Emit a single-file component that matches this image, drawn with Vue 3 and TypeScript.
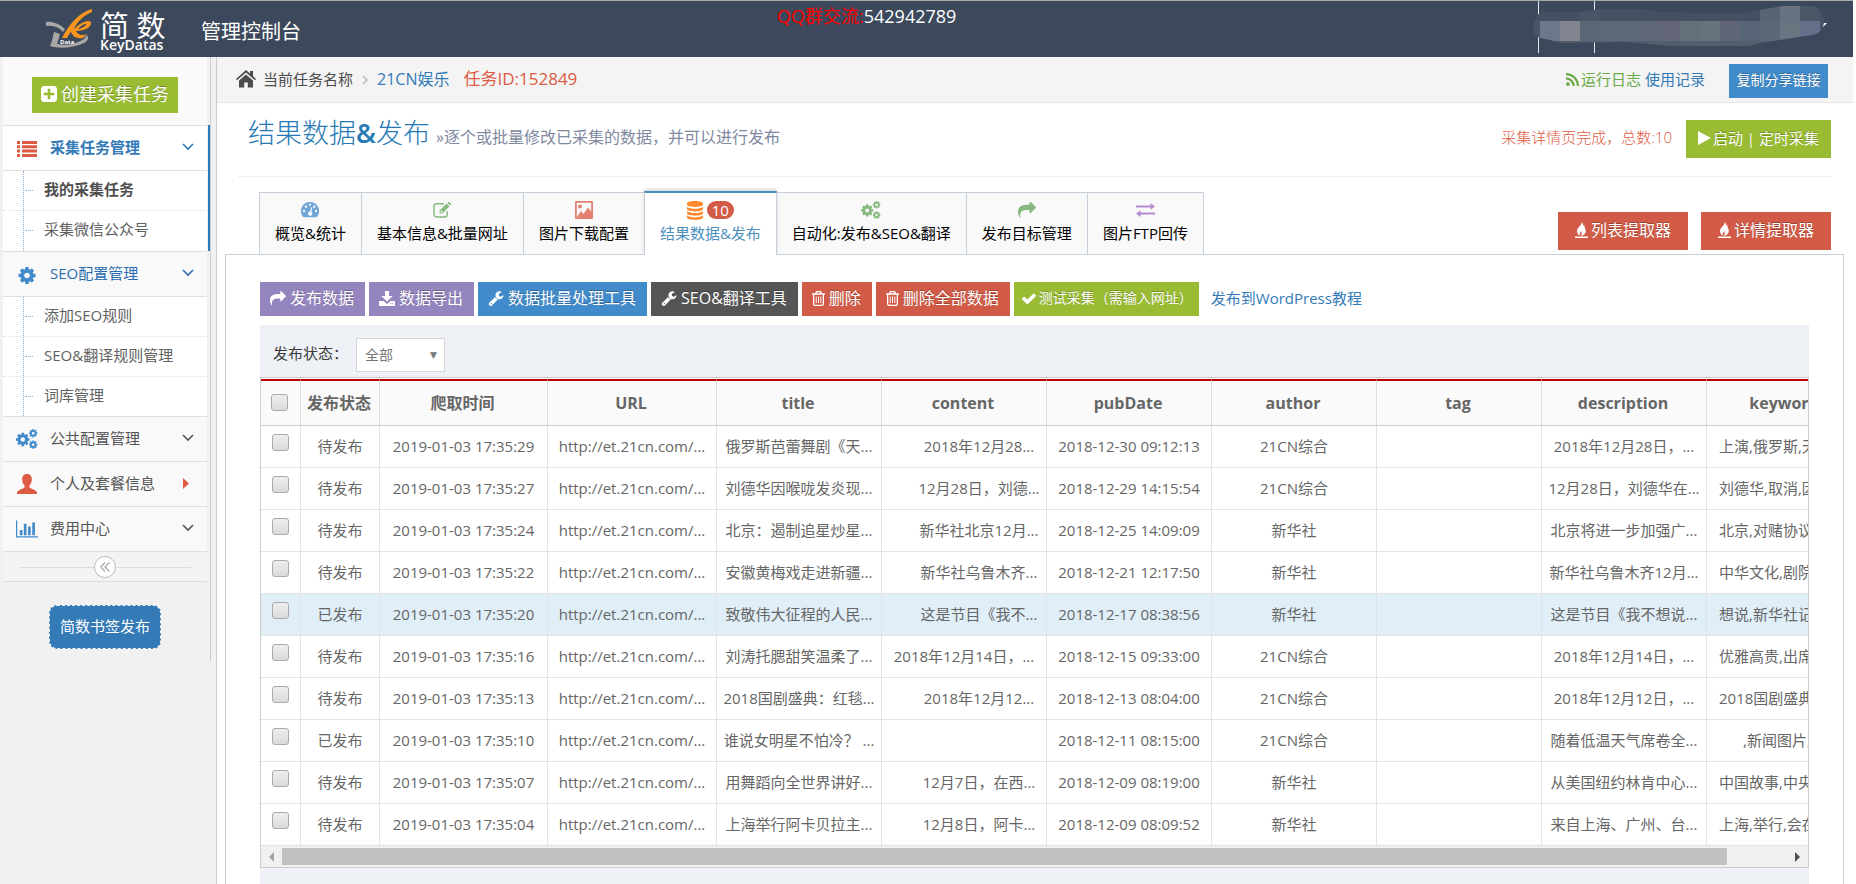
<script setup lang="ts">
import { h, ref } from 'vue'

const cog =
  'M1152 896q0-106-75-181t-181-75-181 75-75 181 75 181 181 75 181-75 75-181zm512-109v222q0 12-8 23t-20 13l-185 28q-19 54-39 91 35 50 107 138 10 12 10 25t-9 23q-27 37-99 108t-94 71q-12 0-26-9l-138-108q-44 23-91 38-16 136-29 186-7 28-36 28h-222q-14 0-24.5-8.5t-11.5-21.5l-28-184q-49-16-90-37l-141 107q-10 9-25 9-14 0-25-11-126-114-165-168-7-10-7-23 0-12 8-23 15-21 51-66.5t54-70.5q-27-50-41-99l-183-27q-13-2-21-12.5t-8-23.5v-222q0-12 8-23t19-13l186-28q14-46 39-92-40-57-107-138-10-12-10-24 0-10 9-23 26-36 98.5-107.5t94.5-71.5q13 0 26 10l138 107q44-23 91-38 16-136 29-186 7-28 36-28h222q14 0 24.5 8.5t11.5 21.5l28 184q49 16 90 37l142-107q9-9 24-9 13 0 25 10 129 119 165 170 7 8 7 22 0 12-8 23-15 21-51 66.5t-54 70.5q26 50 41 98l183 28q13 2 21 12.5t8 23.5z'

const icons: Record<string, [string, string]> = {
  plus: ['128 128 1536 1536', '<path d="M1408 960v-128q0-26-19-45t-45-19h-320v-320q0-26-19-45t-45-19h-128q-26 0-45 19t-19 45v320h-320q-26 0-45 19t-19 45v128q0 26 19 45t45 19h320v320q0 26 19 45t45 19h128q26 0 45-19t19-45v-320h320q26 0 45-19t19-45zm256-544v960q0 119-84.5 203.5t-203.5 84.5h-960q-119 0-203.5-84.5t-84.5-203.5v-960q0-119 84.5-203.5t203.5-84.5h960q119 0 203.5 84.5t84.5 203.5z"/>'],
  list: ['0 0 20 16', '<path d="M0 0h3v3H0zM5 0h15v3H5zM0 4.3h3v3H0zM5 4.3h15v3H5zM0 8.6h3v3H0zM5 8.6h15v3H5zM0 13h3v3H0zM5 13h15v3H5z"/>'],
  cog: ['128 128 1536 1536', `<path d="${cog}"/>`],
  cogs: ['0 0 22 20', `<path transform="translate(-1.1 2.6) scale(.0088)" d="${cog}"/><path transform="translate(12.3 -.7) scale(.0055)" d="${cog}"/><path transform="translate(12.3 10.7) scale(.0055)" d="${cog}"/>`],
  user: ['0 0 20 20', '<path d="M10 0C6.8 0 5.2 2.200 5.200 5.200c0 2.500.7 4.800 2.300 6v2.300C6.500 15 0 15.600 0 19v1h20v-1c0-3.400-6.500-4-7.500-5.500v-2.300c1.600-1.200 2.300-3.500 2.300-6C14.800 2.200 13.200 0 10 0z"/>'],
  chart: ['0 0 23 18', '<path d="M0 0h1.300v16.700H23V18H0zM4 10h2.800v5.500H4zM8.200 3.500H11v12H8.200zM12.600 6.500h2.800v9h-2.800zM17 2.200h2.800v13.300H17z"/>'],
  home: ['0 0 20 18', '<path d="M10 0 0 9l1 1.200L10 2.500l9 7.700L20 9l-3-2.700V1h-3v2.600zM3 10.400V17.500h5.200v-5h3.600v5H17v-7.100l-7-6z"/>'],
  rss: ['0 0 13 13', '<circle cx="1.900" cy="11.100" r="1.900"/><path d="M0 4.300v2.200A6.500 6.500 0 0 1 6.500 13h2.200A8.700 8.700 0 0 0 0 4.300zM0 0v2.200A10.800 10.800 0 0 1 10.800 13H13A13 13 0 0 0 0 0z"/>'],
  play: ['0 0 13 14', '<path d="M0 0v14l13-7z"/>'],
  fire: ['0 0 13 16', '<path d="M0 14.400h13V16H0zM6.800 0C7.300 3 2 5.500 2 9.200 2 11.500 3.500 13 5 13.500 4.300 11.500 5.500 10.500 6 9c1 1 1 3-.2 4.700C9 13.500 10.800 11.400 10.800 9c0-2.500-2-3.600-1.300-6.200C8 3.600 8 5 8 6 8.800 3.800 8.200 1.200 6.800 0z"/>'],
  share: ['0 128 1792 1536', '<path d="M1792 640q0 26-19 45l-512 512q-19 19-45 19t-45-19-19-45v-256h-224q-98 0-175.500 6t-154 21.500-133 42.500-105.500 69.500-80 101-48.500 138.500-17.500 181q0 55 5 123 0 6 2.500 23.500t2.500 26.500q0 15-8.500 25t-23.500 10q-16 0-28-17-7-9-13-22t-13.500-30-10.500-24q-127-285-127-451 0-199 53-333 162-403 875-403h224v-256q0-26 19-45t45-19 45 19l512 512q19 19 19 45z"/>'],
  download: ['0 0 16 15', '<path d="M6 0h4v5h3.700L8 10.600 2.300 5H6zM0 10h4.500L8 13l3.500-3H16v5H0zM11 12.200v1h1v-1zm2.200 0v1h1v-1z" fill-rule="evenodd"/>'],
  wrench: ['64 100 1664 1664', '<path d="M448 1472q0-26-19-45t-45-19-45 19-19 45 19 45 45 19 45-19 19-45zm644-420l-682 682q-37 37-90 37-52 0-91-37l-106-108q-38-36-38-90 0-53 38-91l681-681q39 98 114.500 173.500t173.500 114.500zm634-435q0 39-23 106-47 134-164.500 217.500t-258.500 83.500q-185 0-316.500-131.500t-131.500-316.500 131.500-316.500 316.500-131.500q58 0 121.500 16.500t107.500 46.500q16 11 16 28t-16 28l-293 169v224l193 107q5-3 79-48.500t135.500-81 70.500-35.500q15 0 23.500 10t8.500 25z"/>'],
  trash: ['0 0 13 15', '<path fill-rule="evenodd" d="M4 0h5l1 2.300h3v1.400h-1V13a2 2 0 0 1-2 2H3a2 2 0 0 1-2-2V3.700H0V2.300h3zm.6 2.300h3.800L8 1.300H5zM2.300 3.700V13a.8.8 0 0 0 .8.700h6.800a.8.8 0 0 0 .8-.7V3.700zM3.700 5.400h1V12h-1zm2.300 0h1V12H6zm2.300 0h1V12h-1z"/>'],
  check: ['121 270 1550 1252', '<path d="M1671 566q0 40-28 68l-724 724-136 136q-28 28-68 28t-68-28l-136-136-362-362q-28-28-28-68t28-68l136-136q28-28 68-28t68 28l294 295 656-657q28-28 68-28t68 28l136 136q28 28 28 68z"/>'],
  gauge: ['0 0 18 16', '<path fill-rule="evenodd" d="M9 0a9 9 0 0 0-7.700 13.700c.3.500 1 1.500 1.700 1.500h12c.700 0 1.400-1 1.700-1.500A9 9 0 0 0 9 0zM3 7.800a1.200 1.200 0 1 1 0 2.400 1.200 1.200 0 0 1 0-2.400zm2-4.300a1.200 1.200 0 1 1 0 2.400 1.200 1.200 0 0 1 0-2.400zM9 1.400a1.200 1.200 0 1 1 0 2.400 1.200 1.200 0 0 1 0-2.400zm4.200 2.100a1.200 1.200 0 1 1 0 2.400 1.200 1.200 0 0 1 0-2.400zM15 7.800a1.200 1.200 0 1 1 0 2.400 1.200 1.200 0 0 1 0-2.400zM10.200 5.200l1.200.3-1.100 4.200a2.200 2.200 0 1 1-1.300-.3z"/>'],
  edit: ['0 0 18 16', '<path fill="none" stroke="currentColor" stroke-width="1.400" d="M11 1.700H3.500a2.500 2.500 0 0 0-2.500 2.500v8.300A2.500 2.500 0 0 0 3.500 15h8.200a2.500 2.500 0 0 0 2.500-2.500V9"/><path fill-rule="evenodd" d="m13.600 1.600 2.800 2.800-7 7H6.600V8.600zM14.400.8l.7-.6a1 1 0 0 1 1.300 0l1.400 1.400a1 1 0 0 1 0 1.300l-.6.7zM7.700 8.900v1.500h1.500l.6-.600-1.500-1.500z"/>'],
  image: ['0 0 18 18', '<path fill-rule="evenodd" d="M1 0h16a1 1 0 0 1 1 1v16a1 1 0 0 1-1 1H1a1 1 0 0 1-1-1V1a1 1 0 0 1 1-1zm.800 1.800v14.400L6 10l2.500 3 4.500-6.500 3.200 4V1.800zM5 3.600a2 2 0 1 1 0 4 2 2 0 0 1 0-4z"/>'],
  database: ['0 0 16 19', '<path d="M8 0c4.400 0 8 1.100 8 2.400v1.200C16 4.900 12.400 6 8 6S0 4.900 0 3.600V2.400C0 1.100 3.600 0 8 0zM0 6c1.700 1.200 4.800 1.800 8 1.800s6.300-.6 8-1.800v2c0 1.300-3.600 2.400-8 2.400S0 9.300 0 8zM0 10.300c1.700 1.200 4.800 1.800 8 1.800s6.300-.6 8-1.800v2c0 1.300-3.600 2.400-8 2.400s-8-1.100-8-2.400zM0 14.600c1.700 1.200 4.800 1.800 8 1.800s6.300-.6 8-1.800v2C16 17.900 12.400 19 8 19s-8-1.100-8-2.400z"/>'],
  exchange: ['0 0 19 14', '<path d="M0 2.400h14.500V0L19 3.400l-4.500 3.400V4.500H0zM19 9.500H4.500V7.200L0 10.600 4.500 14v-2.400H19z"/>'],
  down: ['0 0 12 8', '<path fill="none" stroke="currentColor" stroke-width="1.600" d="m1 1 5 5 5-5"/>'],
  right: ['0 0 6 11', '<path d="M0 0v11l6-5.500z"/>'],
  next: ['0 0 6 10', '<path fill="none" stroke="currentColor" stroke-width="1.500" d="m1 1 4 4-4 4"/>'],
  collapse: ['0 0 10 10', '<path fill="none" stroke="currentColor" stroke-width="1.300" d="M5 .5.800 5 5 9.500M9.300.5 5.100 5l4.200 4.500"/>'],
}

const Icon = (props: { name: string }) =>
  h('svg', { viewBox: icons[props.name][0], innerHTML: icons[props.name][1], 'aria-hidden': 'true' })
Icon.props = ['name']

interface Group {
  label: string
  icon: string
  tone: string
  arrow: string
  items: string[]
}
const groups: Group[] = [
  { label: '采集任务管理', icon: 'list', tone: 'red', arrow: 'down', items: ['我的采集任务', '采集微信公众号'] },
  { label: 'SEO配置管理', icon: 'cog', tone: 'blue', arrow: 'down', items: ['添加SEO规则', 'SEO&翻译规则管理', '词库管理'] },
  { label: '公共配置管理', icon: 'cogs', tone: 'blue', arrow: 'down', items: [] },
  { label: '个人及套餐信息', icon: 'user', tone: 'red', arrow: 'right', items: [] },
  { label: '费用中心', icon: 'chart', tone: 'blue', arrow: 'down', items: [] },
]

const tabs = [
  { label: '概览&统计', icon: 'gauge', tone: 'sky' },
  { label: '基本信息&批量网址', icon: 'edit', tone: 'leaf' },
  { label: '图片下载配置', icon: 'image', tone: 'rose' },
  { label: '结果数据&发布', icon: 'database', tone: 'orange', count: 10 },
  { label: '自动化:发布&SEO&翻译', icon: 'cogs', tone: 'leaf' },
  { label: '发布目标管理', icon: 'share', tone: 'leaf' },
  { label: '图片FTP回传', icon: 'exchange', tone: 'violet' },
]
const activeTab = ref(3)

const tools = [
  { label: '发布数据', icon: 'share', tone: 'purple' },
  { label: '数据导出', icon: 'download', tone: 'purple' },
  { label: '数据批量处理工具', icon: 'wrench', tone: 'primary' },
  { label: 'SEO&翻译工具', icon: 'wrench', tone: 'dark' },
  { label: '删除', icon: 'trash', tone: 'danger' },
  { label: '删除全部数据', icon: 'trash', tone: 'danger' },
]

const status = ref('全部')
const columns = ['发布状态', '爬取时间', 'URL', 'title', 'content', 'pubDate', 'author', 'tag', 'description', 'keywords']

interface Row {
  state: string
  time: string
  title: string
  content: string
  date: string
  author: string
  description: string
  keywords: string
}
const row = (state: string, time: string, title: string, content: string, date: string, author: string, description: string, keywords: string): Row => ({
  state, time: '2019-01-03 ' + time, title, content, date, author, description, keywords,
})
const rows: Row[] = [
  row('待发布', '17:35:29', '俄罗斯芭蕾舞剧《天...', '2018年12月28...', '2018-12-30 09:12:13', '21CN综合', '2018年12月28日，...', '上演,俄罗斯,天...'),
  row('待发布', '17:35:27', '刘德华因喉咙发炎现...', '12月28日，刘德...', '2018-12-29 14:15:54', '21CN综合', '12月28日，刘德华在...', '刘德华,取消,因...'),
  row('待发布', '17:35:24', '北京：遏制追星炒星...', '新华社北京12月...', '2018-12-25 14:09:09', '新华社', '北京将进一步加强广...', '北京,对赌协议...'),
  row('待发布', '17:35:22', '安徽黄梅戏走进新疆...', '新华社乌鲁木齐...', '2018-12-21 12:17:50', '新华社', '新华社乌鲁木齐12月...', '中华文化,剧院...'),
  row('已发布', '17:35:20', '致敬伟大征程的人民...', '这是节目《我不...', '2018-12-17 08:38:56', '新华社', '这是节目《我不想说...', '想说,新华社记...'),
  row('待发布', '17:35:16', '刘涛托腮甜笑温柔了...', '2018年12月14日，...', '2018-12-15 09:33:00', '21CN综合', '2018年12月14日，...', '优雅高贵,出席...'),
  row('待发布', '17:35:13', '2018国剧盛典：红毯...', '2018年12月12...', '2018-12-13 08:04:00', '21CN综合', '2018年12月12日，...', '2018国剧盛典...'),
  row('已发布', '17:35:10', '谁说女明星不怕冷？ ...', '', '2018-12-11 08:15:00', '21CN综合', '随着低温天气席卷全...', ',新闻图片,...'),
  row('待发布', '17:35:07', '用舞蹈向全世界讲好...', '12月7日，在西...', '2018-12-09 08:19:00', '新华社', '从美国纽约林肯中心...', '中国故事,中央...'),
  row('待发布', '17:35:04', '上海举行阿卡贝拉主...', '12月8日，阿卡...', '2018-12-09 08:09:52', '新华社', '来自上海、广州、台...', '上海,举行,会在...'),
]
const longContent = (text: string) => text.endsWith('日，...')

const maskTop = ['#455163', '#455163', '#4a5567', '#455163', '#455163', '#455163', '#455163', '#455163', '#455163', '#455163', '#455163', '#5a6373', '#697281', '#4a5766', '#455163']
const maskMid = ['#6c7789', '#80858f', '#5d6675', '#5d6978', '#5e6977', '#606778', '#636779', '#62707b', '#68727f', '#606678', '#576476', '#5d6778', '#6a7380', '#67708a', '#475669']
</script>

<template>
  <div class="app">
    <header class="top">
      <svg class="logo" viewBox="0 0 50 42" aria-hidden="true">
        <path d="M1 14c6-1 14 2 19 7l-2 3C14 19 8 17 1 18z" fill="#a9a6a6" />
        <path d="M9 24c-1 5-2 9-4 14 8 3 24 2 34-3 4-2 5-5 3-8l-3 4c-8 5-17 7-27 5l3-10z" fill="#a9a6a6" />
        <path d="M47 1C37 3 25 14 17 30h5c1-2 3-5 4-6 2 5 6 7 12 6l4-4c-5 2-9 1-11-3 8 0 14-3 15-7 1-3-3-4-7-2-3 1-7 4-10 7C32 13 40 7 47 4zM41 16c1 1-3 4-8 5 2-3 6-5 8-5z" fill="#f7941d" />
        <text x="15" y="36" font-size="6" font-weight="700" fill="#fff">Data</text>
      </svg>
      <div class="brand">
        <strong>简 数</strong>
        <span>KeyDatas</span>
      </div>
      <div class="console">管理控制台</div>
      <div class="qq"><em>QQ群交流:</em>542942789</div>
      <svg class="account" viewBox="0 0 296 52" aria-hidden="true">
        <defs>
          <clipPath id="mask">
            <path d="M0 28C1 16 5 11 12 11h35L67 8h40l20 3 80 2 20-4 23-4h28c8 1 13 7 13 15s-5 13-12 14l-52 8-10 3h-80l-44-4-66 1-10-3C4 37 0 34 0 28z" />
          </clipPath>
        </defs>
        <path d="M5.500 0v52M61.500 0v52" stroke="#e6e6e6" />
        <g clip-path="url(#mask)">
          <path d="M0 0h296v20H0z" fill="#455163" />
          <path d="M0 20h7v20H0z" fill="#495567" />
          <path d="M0 40h296v12H0z" fill="#535d6c" />
          <rect v-for="(c, i) in maskTop" :key="'t' + i" :x="7 + i * 20" y="0" width="20" height="20" :fill="c" />
          <rect v-for="(c, i) in maskMid" :key="'m' + i" :x="7 + i * 20" y="20" width="20" height="20" :fill="c" />
        </g>
        <path d="M294 22h-3l-1 4z" fill="#fff" />
      </svg>
    </header>

    <div class="body">
      <aside>
        <div class="side">
          <div class="create"><button class="btn green big"><Icon name="plus" />创建采集任务</button></div>
          <nav>
            <section v-for="(g, gi) in groups" :key="g.label" :class="{ current: gi === 0, open: gi === 1 }">
              <a href="#" class="group"><Icon :name="g.icon" :class="['gi', g.tone]" /><span>{{ g.label }}</span><Icon :name="g.arrow" :class="g.arrow" /></a>
              <ul v-if="g.items.length">
                <li v-for="(item, i) in g.items" :key="item" :class="{ chosen: gi === 0 && i === 0 }"><a href="#">{{ item }}</a></li>
              </ul>
            </section>
          </nav>
          <div class="collapse"><button aria-label="collapse"><Icon name="collapse" /></button></div>
          <button class="bookmark">简数书签发布</button>
        </div>
      </aside>

      <main>
        <div class="crumbs">
          <Icon name="home" class="home" />
          <span>当前任务名称</span>
          <Icon name="next" class="next" />
          <a href="#" class="task">21CN娱乐</a>
          <span class="taskid">任务ID:152849</span>
          <div class="links">
            <a href="#" class="log"><Icon name="rss" />运行日志</a>
            <a href="#">使用记录</a>
            <button class="btn primary copy">复制分享链接</button>
          </div>
        </div>

        <div class="heading">
          <h1>结果数据<b>&amp;</b>发布</h1>
          <small>»逐个或批量修改已采集的数据，并可以进行发布</small>
          <span class="done">采集详情页完成，总数:10</span>
          <button class="btn green start"><Icon name="play" />启动 | 定时采集</button>
        </div>

        <div class="tabrow">
          <ul class="tabs">
            <li v-for="(t, i) in tabs" :key="t.label" :class="{ active: i === activeTab }">
              <a href="#" @click.prevent="activeTab = i">
                <span class="ti"><Icon :name="t.icon" :class="[t.tone, t.icon]" /><i v-if="t.count">{{ t.count }}</i></span>
                <span>{{ t.label }}</span>
              </a>
            </li>
          </ul>
          <div class="extract">
            <button class="btn danger"><Icon name="fire" />列表提取器</button>
            <button class="btn danger"><Icon name="fire" />详情提取器</button>
          </div>
        </div>

        <div class="panel">
          <div class="tools">
            <button v-for="t in tools" :key="t.label" :class="['btn', t.tone]"><Icon :name="t.icon" :class="t.icon" />{{ t.label }}</button>
            <button class="btn green test"><Icon name="check" class="check" />测试采集（需输入网址）</button>
            <a href="#">发布到WordPress教程</a>
          </div>
          <div class="filter">
            <label for="status">发布状态：</label>
            <span class="select">
              <select id="status" v-model="status"><option>全部</option></select>
            </span>
          </div>
          <div class="grid">
            <div class="view">
              <table>
                <colgroup>
                  <col class="c0" /><col class="c1" /><col class="c2" /><col class="c3" /><col v-for="n in 7" :key="n" class="c4" />
                </colgroup>
                <thead>
                  <tr>
                    <th><input type="checkbox" aria-label="全部" /></th>
                    <th v-for="c in columns" :key="c">{{ c }}</th>
                  </tr>
                </thead>
                <tbody>
                  <tr v-for="(r, i) in rows" :key="r.time" :class="{ hover: i === 4 }">
                    <td class="tick"><input type="checkbox" :aria-label="r.title" /></td>
                    <td>{{ r.state }}</td>
                    <td>{{ r.time }}</td>
                    <td>http://et.21cn.com/...</td>
                    <td>{{ r.title }}</td>
                    <td :class="{ indent: !longContent(r.content) }">{{ r.content }}</td>
                    <td>{{ r.date }}</td>
                    <td>{{ r.author }}</td>
                    <td></td>
                    <td>{{ r.description }}</td>
                    <td :class="['keys', { late: r.keywords.startsWith(',') }]">{{ r.keywords }}</td>
                  </tr>
                </tbody>
              </table>
            </div>
            <div class="scroll">
              <span class="arrow left"></span>
              <span class="track"><span class="thumb"></span></span>
              <span class="arrow rightward"></span>
            </div>
          </div>
          <div class="pager"></div>
        </div>
      </main>
    </div>
  </div>
</template>

<style>
body {
  margin: 0;
  background: #fff;
}
</style>

<style scoped>
* {
  box-sizing: border-box;
}
.app {
  height: 100vh;
  display: flex;
  flex-direction: column;
  overflow: hidden;
  padding-right: 3px;
  font: 15px/20px 'Open Sans', 'Noto Sans CJK SC', sans-serif;
  color: #555;
  white-space: nowrap;
}
button, select {
  font: inherit;
  margin: 0;
  padding: 0;
  border: 0;
}
a {
  color: #337ab7;
  text-decoration: none;
}
ul {
  list-style: none;
  margin: 0;
  padding: 0;
}
svg {
  fill: currentColor;
  flex: none;
}

/* top bar */
.top {
  height: 57px;
  flex: none;
  display: flex;
  align-items: flex-start;
  background: #3c485b;
  border-top: 1px solid #aaa;
  color: #fff;
}
.logo {
  width: 50px;
  height: 42px;
  margin: 7px 0 0 45px;
}
.brand {
  margin: 10px 0 0 5px;
  width: 67px;
}
.brand strong {
  display: block;
  font-size: 29px;
  line-height: 29px;
  font-weight: 400;
}
.brand span {
  display: block;
  font: 600 14px/10px 'Open Sans', sans-serif;
}
.console {
  margin: 16px 0 0 34px;
  width: 102px;
  font-size: 20px;
  line-height: 30px;
}
.qq {
  margin-left: 474px;
  font-size: 18px;
  line-height: 30px;
}
.qq em {
  font-style: normal;
  color: #f00;
}
.account {
  width: 296px;
  height: 52px;
  margin: 0 24px 0 auto;
}

.body {
  flex: 1;
  display: flex;
  min-height: 0;
}

/* sidebar */
aside {
  width: 217px;
  flex: none;
  background: #f1f1f1;
  border-right: 1px solid #ccc;
}
.side {
  width: 208px;
  height: 604px;
  margin-left: 3px;
  padding-right: 3px;
  border-right: 1px solid #ccc;
  background: #f1f1f1;
}
.create {
  height: 68px;
  padding: 20px 29px 0;
  background: #fafafa;
}
.btn {
  display: inline-flex;
  align-items: center;
  justify-content: center;
  padding-bottom: 2px;
  color: #fff;
  text-shadow: 0 -1px 0 rgba(0, 0, 0, 0.25);
}
.green { background: #9abc32; }
.primary { background: #428bca; }
.purple { background: #9585bf; }
.dark { background: #555; }
.danger { background: #d15b47; }
.big {
  width: 146px;
  height: 36px;
  font-size: 18px;
  gap: 4px;
}
.big svg {
  width: 16px;
  height: 16px;
}
section {
  position: relative;
  background: #fff;
}
.group {
  height: 45px;
  display: flex;
  align-items: center;
  padding: 0 13px 2px;
  border-top: 1px solid #e0e0e0;
  background: #f9f9f9;
  color: #555;
}
.group span {
  flex: 1;
}
.gi {
  width: 22px;
  height: 20px;
  margin: 2px 12px 0 0;
}
.current .gi { height: 16px; margin-top: 4px; }
.open .gi { height: 17px; margin-top: 4px; }
.red { color: #dd5a43; }
.blue { color: #428bca; }
.down {
  width: 12px;
  height: 8px;
}
.right {
  width: 6px;
  height: 11px;
  margin-right: 5px;
  color: #dd5a43;
}
.current .group {
  background: #fff;
  font-weight: 600;
  color: #337ab7;
}
.open .group {
  color: #2b6cb0;
}
.current::after {
  content: '';
  position: absolute;
  top: 0;
  bottom: 0;
  right: -3px;
  width: 2px;
  background: #2b7dbc;
}
section ul {
  position: relative;
  border-top: 1px solid #e0e0e0;
}
section ul::before {
  content: '';
  position: absolute;
  left: 20px;
  top: 0;
  bottom: 0;
  border-left: 1px dotted #8fb0cc;
}
section li {
  height: 40px;
  display: flex;
  align-items: center;
  border-top: 1px dotted #ddd;
}
section li:first-child {
  height: 39px;
  border-top: 0;
}
section li::before {
  content: '';
  width: 8px;
  margin: 0 11px 0 22px;
  border-top: 1px dotted #8fb0cc;
}
section li a {
  color: #616161;
  padding-bottom: 4px;
}
.current ul {
  padding-bottom: 1px;
}
.chosen a {
  font-weight: 600;
  color: #4f4f4f;
}
.collapse {
  height: 31px;
  display: flex;
  align-items: center;
  justify-content: center;
  border-top: 1px solid #e0e0e0;
  border-bottom: 1px solid #ddd;
  background: linear-gradient(#ddd, #ddd) 17px 15px / 171px 1px no-repeat #f3f3f3;
}
.collapse button {
  display: flex;
  align-items: center;
  justify-content: center;
  width: 22px;
  height: 22px;
  border: 1px solid #bbb;
  border-radius: 50%;
  background: #fff;
  color: #aaa;
}
.collapse svg {
  width: 10px;
  height: 10px;
}
.bookmark {
  display: block;
  width: 112px;
  height: 44px;
  margin: 23px auto 0 46px;
  padding-bottom: 2px;
  border: 1px dashed #f1f1f1;
  border-radius: 8px;
  background: #337ab7;
  color: #fff;
}

/* main column */
main {
  flex: 1;
  min-width: 0;
  display: flex;
  flex-direction: column;
  background: #fff;
}
.crumbs {
  height: 46px;
  flex: none;
  display: flex;
  align-items: center;
  padding: 0 25px 1px 19px;
  background: #f4f4f4;
  border-bottom: 1px solid #e5e5e5;
  color: #4c4c4c;
}
.home {
  width: 20px;
  height: 18px;
  margin-right: 7px;
}
.next {
  width: 6px;
  height: 10px;
  margin: 2px 9px 0;
  color: #b2b6bf;
}
.task {
  font-size: 16px;
}
.taskid {
  margin-left: 14px;
  font-size: 17px;
  color: #dd5a43;
}
.links {
  margin-left: auto;
  display: flex;
  align-items: center;
  gap: 4px;
}
.log {
  display: flex;
  align-items: center;
  gap: 2px;
  color: #69aa46;
}
.log svg {
  width: 13px;
  height: 13px;
}
.copy {
  width: 99px;
  height: 34px;
  margin: 3px 0 0 20px;
  font-size: 14px;
}
.heading {
  height: 74px;
  flex: none;
  display: flex;
  align-items: flex-start;
  margin: 0 22px;
  padding: 17px 0 0 9px;
  border-bottom: 1px dotted #ddd;
}
h1 {
  margin: 0;
  font-size: 27px;
  line-height: 26px;
  font-weight: 300;
  color: #2679b5;
}
h1 b {
  font-weight: 600;
}
small {
  margin-left: 6px;
  font-size: 16px;
  line-height: 34px;
  color: #8089a0;
}
.done {
  margin-left: auto;
  line-height: 34px;
  font-weight: 300;
  color: #dd5a43;
}
.start {
  width: 145px;
  height: 38px;
  margin-left: 14px;
  gap: 2px;
}
.start svg {
  width: 13px;
  height: 14px;
}
.tabrow {
  flex: none;
  display: flex;
  justify-content: space-between;
  padding: 15px 22px 0 42px;
}
.tabs {
  display: flex;
  position: relative;
  z-index: 1;
}
.tabs li {
  height: 62px;
  border: 1px solid #c5d0dc;
  border-width: 1px 0 0 1px;
  background: #f9f9f9;
}
.tabs li:last-child {
  border-right-width: 1px;
}
.tabs a {
  height: 100%;
  display: flex;
  flex-direction: column;
  align-items: center;
  padding: 5px 15px 0;
  color: #000;
}
.tabs .active {
  height: 64px;
  margin: -1px 0 -1px;
  border-top: 2px solid #4c8fbd;
  border-right-width: 1px;
  margin-right: -1px;
  background: #fff;
  box-shadow: 0 -2px 3px rgba(0, 0, 0, 0.15);
  clip-path: inset(-4px -3px 0);
}
.tabs .active a {
  color: #4c8fbd;
}
.ti {
  height: 24px;
  display: flex;
  align-items: center;
  gap: 4px;
}
.ti svg { width: 18px; height: 16px; }
.ti svg.cogs { width: 20px; height: 18px; }
.ti svg.image { height: 18px; }
.ti svg.database { width: 16px; height: 19px; }
.ti svg.exchange { width: 19px; height: 14px; }
.ti i {
  width: 27px;
  height: 18px;
  border-radius: 9px;
  background: #d15b47;
  color: #fff;
  font-style: normal;
  line-height: 18px;
  text-align: center;
}
.tabs a > span:last-child {
  margin-top: 1px;
}
.sky { color: #6ea6d8; }
.leaf { color: #87b87f; }
.rose { color: #e4806f; }
.orange { color: #ff892a; }
.violet { color: #b28bd0; }
.extract {
  display: flex;
  gap: 13px;
  padding-top: 20px;
}
.extract .btn {
  width: 130px;
  height: 38px;
  font-size: 16px;
  gap: 3px;
}
.extract svg {
  width: 13px;
  height: 16px;
}

/* results panel */
.panel {
  flex: 1;
  min-height: 0;
  display: flex;
  flex-direction: column;
  margin: 0 9px 0 8px;
  padding: 27px 34px 0;
  border: 1px solid #c5d0dc;
  border-bottom: 0;
}
.tools {
  display: flex;
  align-items: center;
  gap: 4px;
  margin-bottom: 9px;
}
.tools .btn {
  height: 34px;
  padding: 0 11px 2px 10px;
  font-size: 16px;
  gap: 4px;
}
.tools .test {
  padding: 0 6px 2px 8px;
  font-size: 14px;
  gap: 3px;
}
.tools svg { width: 16px; height: 15px; }
.tools svg.trash { width: 13px; }
.tools svg.check { width: 14px; }
.tools a {
  margin-left: 8px;
  padding-bottom: 2px;
}
.filter {
  height: 52px;
  flex: none;
  display: flex;
  align-items: center;
  padding: 7px 13px 0;
  background: #eef2f7;
  color: #393939;
}
.filter label {
  padding-bottom: 3px;
}
.select {
  position: relative;
  margin-left: 8px;
}
.select::after {
  content: '▼';
  position: absolute;
  right: 8px;
  top: 7px;
  font: 9px/20px 'DejaVu Sans', sans-serif;
  color: #777;
  pointer-events: none;
}
select {
  display: block;
  appearance: none;
  width: 89px;
  height: 34px;
  padding: 0 8px;
  border: 1px solid #d5d5d5;
  background: #fff;
  font-size: 14px;
  color: #777;
}
.grid {
  flex: none;
  border: 1px solid #ccc;
}
.view {
  overflow: hidden;
  padding-top: 1px;
}
table {
  width: 1573px;
  table-layout: fixed;
  border-collapse: separate;
  border-spacing: 0;
  color: #666;
}
.c0 { width: 40px; }
.c1 { width: 79px; }
.c2 { width: 168px; }
.c3 { width: 169px; }
.c4 { width: 165px; }
th {
  height: 47px;
  padding: 0 2px 1px 0;
  border: 1px solid #ddd;
  border-width: 2px 1px 1px 0;
  border-top-color: #b80000;
  border-bottom-color: #ccc;
  background: #fafafa;
  font-size: 16px;
  font-weight: 700;
}
td {
  height: 42px;
  padding: 0 0 2px;
  text-align: center;
  border: 1px solid #e1e4e7;
  border-width: 0 1px 1px 0;
}
.tick {
  vertical-align: top;
  padding-top: 8px;
}
.indent {
  padding-left: 30px;
}
.keys {
  text-align: left;
  padding-left: 12px;
}
.late {
  padding-left: 36px;
}
.hover td {
  background: #e0eef8;
}
input[type='checkbox'] {
  appearance: none;
  display: block;
  width: 17px;
  height: 17px;
  margin: 0 auto;
  border: 1px solid #aaa;
  border-radius: 3px;
  background: linear-gradient(#eee, #dadada);
}
.scroll {
  height: 21px;
  display: flex;
  align-items: center;
  background: #f1f1f1;
}
.arrow {
  border: 5px solid transparent;
}
.left {
  border-left: 0;
  border-right-color: #a3a3a3;
  margin: 0 8px;
}
.rightward {
  border-right: 0;
  border-left-color: #505050;
  margin: 0 8px;
}
.track {
  flex: 1;
}
.thumb {
  display: block;
  width: 96%;
  height: 17px;
  background: #c1c1c1;
}
.pager {
  flex: 1;
  background: #eef2f7;
}
</style>
